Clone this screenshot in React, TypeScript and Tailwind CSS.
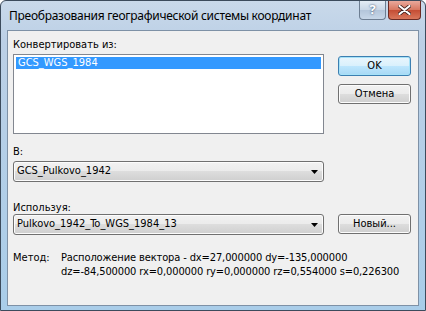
import React from "react";

const dlg = { fontFamily: '"DejaVu Sans Condensed", Tahoma, "DejaVu Sans", sans-serif' };

function Btn({ children, def }: { children: React.ReactNode; def?: boolean }) {
  return (
    <div
      className={
        "w-[73px] h-[20px] rounded-[3px] border flex items-center justify-center text-[11px] text-black " +
        (def
          ? "border-[#3c7fb1] bg-[linear-gradient(#eaf6fd_0%,#d9f0fc_50%,#bee6fd_50%,#a7d9f5_100%)] shadow-[inset_0_0_0_1px_#a6e2f8]"
          : "border-[#707070] bg-[linear-gradient(#f2f2f2_0%,#ebebeb_50%,#dddddd_50%,#cfcfcf_100%)] shadow-[inset_0_0_0_1px_#fcfcfc]")
      }
    >
      {children}
    </div>
  );
}

function Combo({ text }: { text: string }) {
  return (
    <div className="w-[311px] h-[21px] rounded-[3px] border border-[#707070] bg-[linear-gradient(#f2f2f2_0%,#ebebeb_50%,#dddddd_50%,#cfcfcf_100%)] shadow-[inset_0_0_0_1px_#fcfcfc] flex items-center pl-[3px] pr-[5px]">
      <span className="flex-1 text-[11px] text-black">{text}</span>
      <svg width="7" height="4" viewBox="0 0 7 4">
        <path d="M0 0H7L3.5 4Z" fill="#000" />
      </svg>
    </div>
  );
}

export default function App() {
  return (
    <div className="w-[426px] h-[311px] bg-white">
      <div className="w-[426px] h-[311px] border border-[#3c4b5c] rounded-t-[6px] bg-[linear-gradient(#c9d9ea,#bcd0e6_40px,#a9cde9)] flex flex-col">
        {/* title bar */}
        <div className="h-[29px] flex items-start">
          <div
            className="flex-1 pl-[8px] pt-[6px] text-[12px] text-black tracking-[-0.27px]"
            style={{ fontFamily: '"Noto Sans", "Open Sans", sans-serif' }}
          >
            Преобразования географической системы координат
          </div>
          <div className="flex mr-[4px] gap-[2px]">
            <div className="w-[27px] h-[19px] rounded-b-[4px] border border-t-0 border-[#6d7e92] bg-[linear-gradient(#e4ecf5,#c8d6e6_50%,#b3c5da_50%,#c7d7e8)] flex items-center justify-center text-[13px] font-bold text-white [text-shadow:0_0_2px_#1c3457]">
              ?
            </div>
            <div className="w-[33px] h-[19px] rounded-b-[4px] border border-t-0 border-[#6a2a24] bg-[linear-gradient(#e9a99c,#d7765f_50%,#c44c33_50%,#d9775c)] flex items-center justify-center">
              <svg width="13" height="10" viewBox="0 0 13 10">
                <path d="M1.5 1L11.5 9M11.5 1L1.5 9" stroke="#3a1d1a" strokeWidth="3.6" strokeLinecap="round" />
                <path d="M1.5 1L11.5 9M11.5 1L1.5 9" stroke="#fff" strokeWidth="2.2" strokeLinecap="round" />
              </svg>
            </div>
          </div>
        </div>
        {/* body */}
        <div className="flex-1 mx-[6px] mb-[4px] border border-[#7e91a6] bg-[#f0f0f0] relative" style={dlg}>
          <div className="pl-[5px] pt-[7px] flex">
            <div className="flex flex-col">
              <div className="text-[11px] text-black h-[16px] leading-[13px]">Конвертировать из:</div>
              <div className="w-[311px] h-[80px] border border-[#828790] bg-white p-[2px]">
                <div className="h-[12px] bg-[#3399ff] text-white text-[11px] leading-[12px] pl-[2px]">GCS_WGS_1984</div>
              </div>
              <div className="text-[11px] text-black mt-[11px] h-[16px] leading-[13px]">В:</div>
              <Combo text="GCS_Pulkovo_1942" />
              <div className="text-[11px] text-black mt-[19px] h-[13px] leading-[13px]">Используя:</div>
              <Combo text="Pulkovo_1942_To_WGS_1984_13" />
            </div>
            <div className="flex flex-col ml-[14px] pt-[18px]">
              <Btn def>OK</Btn>
              <div className="h-[8px]" />
              <Btn>Отмена</Btn>
              <div className="h-[110px]" />
              <Btn>Новый...</Btn>
            </div>
          </div>
          <div className="flex pl-[5px] mt-[16px] text-[11px] text-black leading-[14px]">
            <div className="w-[48px]">Метод:</div>
            <div className="tracking-[-0.12px]">
              Расположение вектора - dx=27,000000 dy=-135,000000
              <br />
              dz=-84,500000 rx=0,000000 ry=0,000000 rz=0,554000 s=0,226300
            </div>
          </div>
        </div>
      </div>
    </div>
  );
}
